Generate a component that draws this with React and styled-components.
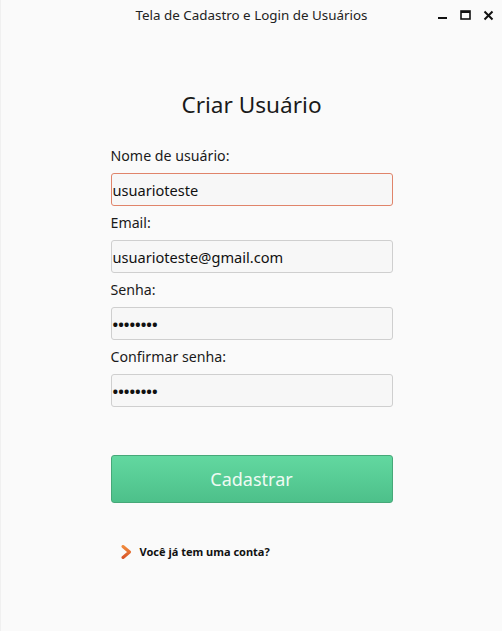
import React from "react";
import styled, { createGlobalStyle } from "styled-components";

const GlobalStyle = createGlobalStyle`
  html, body {
    margin: 0;
    padding: 0;
    background: #fafafa;
  }
  body {
    font-family: "Noto Sans", "DejaVu Sans", sans-serif;
    color: #1a1a1a;
  }
`;

const Window = styled.div`
  width: 502px;
  height: 631px;
  background: #fafafa;
  display: flex;
  flex-direction: column;
  box-sizing: border-box;
  border-left: 1px solid #f0f0f0;
`;

const TitleBar = styled.div`
  height: 30px;
  display: grid;
  grid-template-columns: 1fr auto 1fr;
  align-items: center;
  padding: 0 8px;
`;

const TitleText = styled.div`
  font-size: 13.4px;
  color: #222;
`;

const Controls = styled.div`
  justify-self: end;
  display: flex;
  align-items: center;
  gap: 12px;
  padding-right: 0;
`;

const Form = styled.div`
  width: 282px;
  margin: 0 auto;
  display: flex;
  flex-direction: column;
`;

const Heading = styled.h1`
  margin: 60px 0 0;
  font-size: 22.6px;
  font-weight: 400;
  text-align: center;
  line-height: 30px;
`;

const Label = styled.label`
  font-size: 14.2px;
  line-height: 18px;
  margin-top: ${(p) => p.$top}px;
  margin-bottom: 8px;
`;

const Input = styled.div`
  height: 33px;
  box-sizing: border-box;
  border: 1px solid ${(p) => (p.$focused ? "#e0846a" : "#cfcfcf")};
  border-radius: 3px;
  background: #f7f7f7;
  display: flex;
  align-items: center;
  padding: 0 1px;
  font-size: ${(p) => (p.$secret ? "15px" : "14.6px")};
  font-weight: ${(p) => (p.$secret ? 700 : 400)};
  color: #111;
  letter-spacing: ${(p) => (p.$secret ? "0px" : "0")};
`;

const Button = styled.button`
  margin-top: 48px;
  height: 48px;
  border: 1px solid #46a878;
  border-radius: 3px;
  background: linear-gradient(#62d8a0, #4dc08a);
  color: #eefaf3;
  font-family: inherit;
  font-size: 18px;
  cursor: pointer;
`;

const Link = styled.a`
  margin-top: 41px;
  margin-left: 10px;
  display: flex;
  align-items: center;
  gap: 8px;
  font-size: 11px;
  font-weight: 700;
  color: #111;
  cursor: pointer;
`;

const Chevron = () => (
  <svg width="11" height="14" viewBox="0 0 11 14">
    <defs>
      <linearGradient id="chev" x1="0" y1="0" x2="0" y2="1">
        <stop offset="0" stopColor="#f08a3c" />
        <stop offset="1" stopColor="#d9562a" />
      </linearGradient>
    </defs>
    <path d="M2 1.5 L8.5 7 L2 12.5" fill="none" stroke="url(#chev)" strokeWidth="3" strokeLinejoin="round" strokeLinecap="round" />
  </svg>
);

export default function App() {
  return (
    <>
      <GlobalStyle />
      <Window>
        <TitleBar>
          <span />
          <TitleText>Tela de Cadastro e Login de Usuários</TitleText>
          <Controls>
            <svg width="10" height="10" viewBox="0 0 10 10">
              <rect x="0" y="7" width="9" height="2" fill="#111" />
            </svg>
            <svg width="11" height="10" viewBox="0 0 11 10">
              <rect x="1" y="1" width="9" height="8" fill="none" stroke="#111" strokeWidth="1.6" />
              <rect x="1" y="1" width="9" height="2" fill="#111" />
            </svg>
            <svg width="11" height="11" viewBox="0 0 11 11">
              <path d="M1.5 1.5 L9.5 9.5 M9.5 1.5 L1.5 9.5" stroke="#111" strokeWidth="2" />
            </svg>
          </Controls>
        </TitleBar>
        <Form>
          <Heading>Criar Usuário</Heading>
          <Label $top={27}>Nome de usuário:</Label>
          <Input $focused>usuarioteste</Input>
          <Label $top={8}>Email:</Label>
          <Input>usuarioteste@gmail.com</Input>
          <Label $top={8}>Senha:</Label>
          <Input $secret>••••••••</Input>
          <Label $top={8}>Confirmar senha:</Label>
          <Input $secret>••••••••</Input>
          <Button>Cadastrar</Button>
          <Link>
            <Chevron />
            Você já tem uma conta?
          </Link>
        </Form>
      </Window>
    </>
  );
}
